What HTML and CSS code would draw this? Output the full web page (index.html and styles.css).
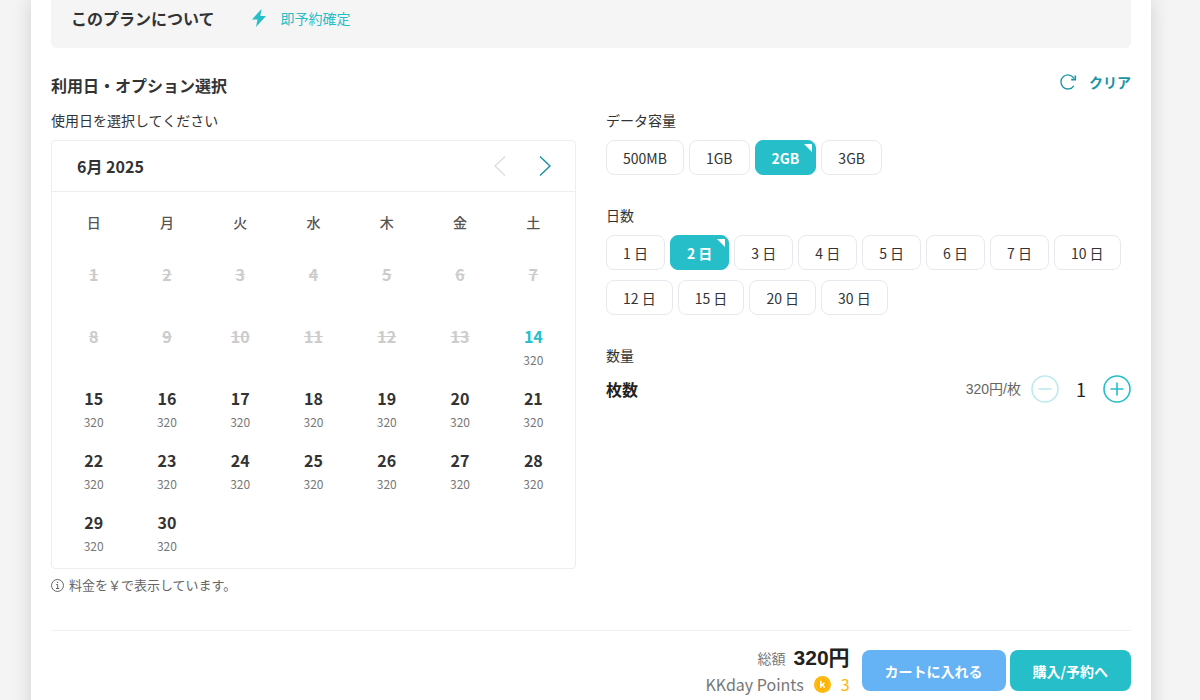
FILE: index.html
```html
<!DOCTYPE html>
<html lang="ja">
<head>
    <meta charset="utf-8">
    <title>KKday</title>
    <link rel="stylesheet" href="styles.css">
</head>
<body>
    <main class="plan">
        <div class="plan-info">
            <h3>このプランについて</h3>
            <svg width="16" height="20" viewBox="0 0 16 20"><path d="M10.500 1 L1 11.500 H6.500 L5 19 L15 8 H9.300 Z" fill="#26bec9"/></svg>
            <span class="instant">即予約確定</span>
        </div>

        <div class="section-head">
            <h3>利用日・オプション選択</h3>
            <button class="clear-btn">
                <svg width="18" height="18" viewBox="0 0 18 18" fill="none" stroke="#1a94a5"><path d="M14.800 12.800 A7 7 0 1 1 15 5.500" stroke-width="1.300"/><path d="M16.300 2.500 V6.600 H12.200" stroke-width="1.600"/></svg>
                クリア
            </button>
        </div>

        <div class="options">
            <div class="date-side">
                <div class="label">使用日を選択してください</div>
                <div class="calendar">
                    <div class="month">
                        <span>6月 2025</span>
                        <div class="arrows">
                            <button class="arrow" aria-label="前の月" disabled><svg width="12" height="20" viewBox="0 0 12 20" fill="none" stroke="#ddd" stroke-width="1.400"><path d="M11 .5 L1 10 L11 19.500"/></svg></button>
                            <button class="arrow" aria-label="次の月"><svg width="12" height="20" viewBox="0 0 12 20" fill="none" stroke="#1a8e9e" stroke-width="1.400"><path d="M1 .5 L11 10 L1 19.500"/></svg></button>
                        </div>
                    </div>
                    <table class="days">
                        <thead>
                            <tr><th>日</th><th>月</th><th>火</th><th>水</th><th>木</th><th>金</th><th>土</th></tr>
                        </thead>
                        <tbody>
                            <tr>
                                <td><button class="day" disabled><s>1</s></button></td>
                                <td><button class="day" disabled><s>2</s></button></td>
                                <td><button class="day" disabled><s>3</s></button></td>
                                <td><button class="day" disabled><s>4</s></button></td>
                                <td><button class="day" disabled><s>5</s></button></td>
                                <td><button class="day" disabled><s>6</s></button></td>
                                <td><button class="day" disabled><s>7</s></button></td>
                            </tr>
                            <tr>
                                <td><button class="day" disabled><s>8</s></button></td>
                                <td><button class="day" disabled><s>9</s></button></td>
                                <td><button class="day" disabled><s>10</s></button></td>
                                <td><button class="day" disabled><s>11</s></button></td>
                                <td><button class="day" disabled><s>12</s></button></td>
                                <td><button class="day" disabled><s>13</s></button></td>
                                <td><button class="day today">14<small>320</small></button></td>
                            </tr>
                            <tr>
                                <td><button class="day">15<small>320</small></button></td>
                                <td><button class="day">16<small>320</small></button></td>
                                <td><button class="day">17<small>320</small></button></td>
                                <td><button class="day">18<small>320</small></button></td>
                                <td><button class="day">19<small>320</small></button></td>
                                <td><button class="day">20<small>320</small></button></td>
                                <td><button class="day">21<small>320</small></button></td>
                            </tr>
                            <tr>
                                <td><button class="day">22<small>320</small></button></td>
                                <td><button class="day">23<small>320</small></button></td>
                                <td><button class="day">24<small>320</small></button></td>
                                <td><button class="day">25<small>320</small></button></td>
                                <td><button class="day">26<small>320</small></button></td>
                                <td><button class="day">27<small>320</small></button></td>
                                <td><button class="day">28<small>320</small></button></td>
                            </tr>
                            <tr>
                                <td><button class="day">29<small>320</small></button></td>
                                <td><button class="day">30<small>320</small></button></td>
                                <td></td><td></td><td></td><td></td><td></td>
                            </tr>
                        </tbody>
                    </table>
                </div>
                <div class="note">
                    <svg width="13" height="13" viewBox="0 0 13 13" fill="none" stroke="#666"><circle cx="6.500" cy="6.500" r="6"/><path d="M5.200 5.500 H6.700 V9.500 M5 9.500 H8.300"/><path d="M5.900 3.400 H7.100" stroke-width="1.200"/></svg>
                    料金を￥で表示しています。
                </div>
            </div>

            <div class="option-side">
                <div class="label">データ容量</div>
                <div class="choices">
                    <button class="choice">500MB</button>
                    <button class="choice">1GB</button>
                    <button class="choice selected" aria-pressed="true">2GB</button>
                    <button class="choice">3GB</button>
                </div>

                <div class="label">日数</div>
                <div class="choices">
                    <button class="choice">1 日</button>
                    <button class="choice selected" aria-pressed="true">2 日</button>
                    <button class="choice">3 日</button>
                    <button class="choice">4 日</button>
                    <button class="choice">5 日</button>
                    <button class="choice">6 日</button>
                    <button class="choice">7 日</button>
                    <button class="choice">10 日</button>
                    <button class="choice">12 日</button>
                    <button class="choice">15 日</button>
                    <button class="choice">20 日</button>
                    <button class="choice">30 日</button>
                </div>

                <div class="label">数量</div>
                <div class="quantity">
                    <label for="qty">枚数</label>
                    <span class="unit-price">320円/枚</span>
                    <button class="step" aria-label="減らす" disabled><svg width="28" height="28" viewBox="0 0 28 28" fill="none" stroke="#26bec9" stroke-width="1.600"><circle cx="14" cy="14" r="13"/><path d="M7.500 14 H20.500"/></svg></button>
                    <input type="text" id="qty" value="1">
                    <button class="step" aria-label="増やす"><svg width="28" height="28" viewBox="0 0 28 28" fill="none" stroke="#26bec9" stroke-width="1.600"><circle cx="14" cy="14" r="13"/><path d="M7.500 14 H20.500 M14 7.500 V20.500"/></svg></button>
                </div>
            </div>
        </div>

        <div class="footer">
            <div class="total">
                <div class="total-price">総額 <b>320円</b></div>
                <div class="points">
                    KKday Points
                    <svg width="17" height="17" viewBox="0 0 17 17"><circle cx="8.500" cy="8.500" r="8.500" fill="#ffb400"/><circle cx="8.500" cy="8.500" r="6.600" fill="none" stroke="#ffd15c" stroke-width=".8" stroke-dasharray="1.500 1"/><path d="M6.800 4.800 V11.800 M10.500 6.800 L7 9.500 M8.300 8.600 L10.600 11.800" fill="none" stroke="#fff" stroke-width="1.500"/></svg>
                    <span>3</span>
                </div>
            </div>
            <button class="btn cart">カートに入れる</button>
            <button class="btn buy">購入/予約へ</button>
        </div>
    </main>
</body>
</html>
```

FILE: styles.css
```css
body {
    font-family: "Noto Sans CJK JP", sans-serif;
    font-size: 14px;
    line-height: 20px;
    margin: 0;
    padding: 0 49px 0 31px;
    background-color: #f4f4f4;
    color: #333;
}
button {
    font-family: inherit;
    font-size: 14px;
    line-height: 20px;
    color: inherit;
    background: none;
    border: none;
    padding: 0;
    cursor: pointer;
}
h3 {
    font-size: 16px;
    line-height: 24px;
    margin: 0;
}
svg {
    display: block;
}
.plan {
    background-color: white;
    padding: 0 20px;
    box-shadow: 0 0 18px rgba(0,0,0,0.15);
}
.plan-info {
    display: flex;
    align-items: center;
    padding: 6px 20px 18px;
    background-color: #f5f5f5;
    border-radius: 0 0 6px 6px;
}
.plan-info svg {
    margin: 0 14px 0 36px;
}
.instant {
    color: #26bec9;
}
.section-head {
    display: flex;
    justify-content: space-between;
    align-items: flex-start;
    padding-top: 25px;
}
.clear-btn {
    display: flex;
    align-items: center;
    gap: 12px;
    line-height: 18px;
    font-weight: bold;
    color: #1a94a5;
}
.options {
    display: grid;
    grid-template-columns: 1fr 1fr;
    gap: 30px;
    padding-top: 13px;
}
.label {
    margin-bottom: 10px;
}
.calendar {
    border: 1px solid #eee;
    border-radius: 4px;
}
.month {
    display: flex;
    justify-content: space-between;
    align-items: center;
    padding: 13px 24px 13px 25px;
    border-bottom: 1px solid #eee;
    font-size: 16px;
    line-height: 24px;
    font-weight: bold;
}
.arrows {
    display: flex;
    gap: 33px;
}
.days {
    width: calc(100% - 10px);
    table-layout: fixed;
    border-collapse: collapse;
    margin: 0 5px 3px;
}
.days th {
    height: 60px;
    padding: 0 0 3px;
    color: #555;
    font-weight: 500;
}
.days td {
    height: 62px;
    padding: 0;
    text-align: center;
    vertical-align: top;
}
.day {
    width: 100%;
    padding-top: 7px;
    font-size: 16px;
    line-height: 24px;
    font-weight: bold;
}
.day:disabled {
    color: #ccc;
}
.day small {
    display: block;
    font-size: 12px;
    font-weight: normal;
    color: #777;
}
.today {
    color: #26bec9;
}
.note {
    display: flex;
    align-items: center;
    gap: 5px;
    margin-top: 6px;
    font-size: 13px;
    color: #666;
}
.choices {
    display: flex;
    flex-wrap: wrap;
    gap: 10px 5px;
    margin-bottom: 30px;
}
.choice {
    position: relative;
    padding: 7px 16px 6px;
    border: 1px solid #e6e9ed;
    border-radius: 8px;
}
.selected {
    background-color: #26bec9;
    border-color: #26bec9;
    color: white;
    font-weight: bold;
}
/* white corner mark */
.selected::after {
    content: "";
    position: absolute;
    top: 3px;
    right: 3px;
    border: 4px solid white;
    border-left-color: transparent;
    border-bottom-color: transparent;
}
.quantity {
    display: flex;
    align-items: center;
}
.quantity label {
    flex: 1;
    font-size: 16px;
    font-weight: bold;
    color: #222;
}
.unit-price {
    margin-right: 10px;
    font-family: "Liberation Sans", "Noto Sans CJK JP", sans-serif;
    color: #666;
}
.quantity input {
    width: 44px;
    height: 28px;
    padding: 0;
    border: none;
    font-family: inherit;
    font-size: 18px;
    text-align: center;
    color: #222;
}
.step:disabled {
    opacity: 0.3;
}
.footer {
    display: flex;
    justify-content: flex-end;
    align-items: flex-start;
    gap: 4px;
    margin-top: 35px;
    padding: 19px 0 30px;
    border-top: 1px solid #f2f2f2;
}
.total {
    margin-right: 8px;
    color: #777;
}
.total-price {
    display: flex;
    justify-content: flex-end;
    align-items: center;
    gap: 8px;
    line-height: 16px;
}
.total-price b {
    font-family: "Liberation Sans", "Noto Sans CJK JP", sans-serif;
    font-size: 21px;
    color: #222;
}
.points {
    display: flex;
    align-items: center;
    gap: 10px;
    margin-top: 6px;
    font-size: 16px;
    line-height: 24px;
}
.points span {
    color: #ffb400;
}
.btn {
    padding: 11px 23px 10px;
    border-radius: 8px;
    color: white;
    font-weight: bold;
}
.cart {
    background-color: #65b2f5;
}
.buy {
    background-color: #26bec9;
}
```
